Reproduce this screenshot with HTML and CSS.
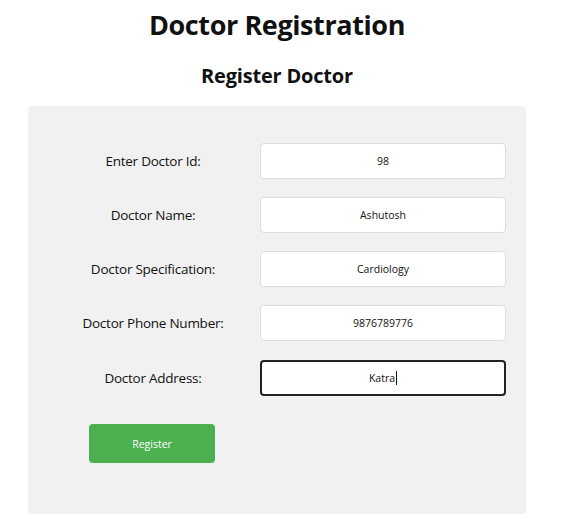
FILE: index.html
```html
<!DOCTYPE html>
<html lang="en">
<head>
<meta charset="utf-8">
<title>Doctor Registration</title>
<link rel="stylesheet" href="styles.css">
</head>
<body>
<div class="page">
  <h1 class="title">Doctor Registration</h1>
  <h2 class="subtitle">Register Doctor</h2>
  <form class="card">
    <div class="row">
      <label class="label" for="id">Enter Doctor Id:</label>
      <input class="field" id="id" type="text" value="98">
    </div>
    <div class="row">
      <label class="label" for="name">Doctor Name:</label>
      <input class="field" id="name" type="text" value="Ashutosh">
    </div>
    <div class="row">
      <label class="label" for="spec">Doctor Specification:</label>
      <input class="field" id="spec" type="text" value="Cardiology">
    </div>
    <div class="row">
      <label class="label" for="phone">Doctor Phone Number:</label>
      <input class="field" id="phone" type="text" value="9876789776">
    </div>
    <div class="row">
      <label class="label" for="addr">Doctor Address:</label>
      <div class="field field-focus">Katra<span class="caret"></span></div>
    </div>
    <div class="row row-btn">
      <div class="btn-cell"><button class="btn" type="button">Register</button></div>
    </div>
  </form>
</div>
</body>
</html>
```

FILE: styles.css
```css
* { box-sizing: border-box; }
html, body { margin: 0; padding: 0; background: #fff; }
body {
  font-family: "Open Sans", "Noto Sans", sans-serif;
  color: #111;
}
.page {
  width: 498px;
  margin-left: 28px;
}
.title {
  margin: 0;
  padding-top: 7px;
  text-align: center;
  font-size: 27px;
  line-height: 36px;
  font-weight: 700;
  letter-spacing: -0.4px;
}
.subtitle {
  margin: 0;
  padding-top: 20px;
  text-align: center;
  font-size: 20px;
  line-height: 26px;
  font-weight: 700;
  letter-spacing: -0.2px;
}
.card {
  margin-top: 17px;
  background: #f1f1f1;
  border-radius: 4px;
  padding: 37px 20px 51px 20px;
  display: flex;
  flex-direction: column;
  gap: 18px;
}
.row {
  display: grid;
  grid-template-columns: 212px 246px;
  align-items: center;
}
.label {
  text-align: center;
  font-size: 13.5px;
  color: #111;
  letter-spacing: -0.25px;
  padding-right: 2px;
}
.field {
  width: 246px;
  height: 36px;
  border: 1px solid #dcdcdc;
  border-radius: 4px;
  background: #fff;
  text-align: center;
  font-family: "Open Sans", "Noto Sans", sans-serif;
  font-size: 10.5px;
  color: #111;
  padding: 0;
  outline: none;
}
.field-focus {
  border: 2px solid #222;
  display: flex;
  align-items: center;
  justify-content: center;
  margin-top: 1px;
}
.caret {
  display: inline-block;
  width: 1px;
  height: 14px;
  background: #111;
  margin-left: 1px;
}
.row-btn { margin-top: 10px; }
.btn-cell {
  display: flex;
  justify-content: center;
  padding-right: 4px;
}
.btn {
  width: 126px;
  height: 39px;
  border: none;
  border-radius: 4px;
  background: #4caf50;
  color: #fff;
  font-family: "Open Sans", "Noto Sans", sans-serif;
  font-size: 10.5px;
}
```
